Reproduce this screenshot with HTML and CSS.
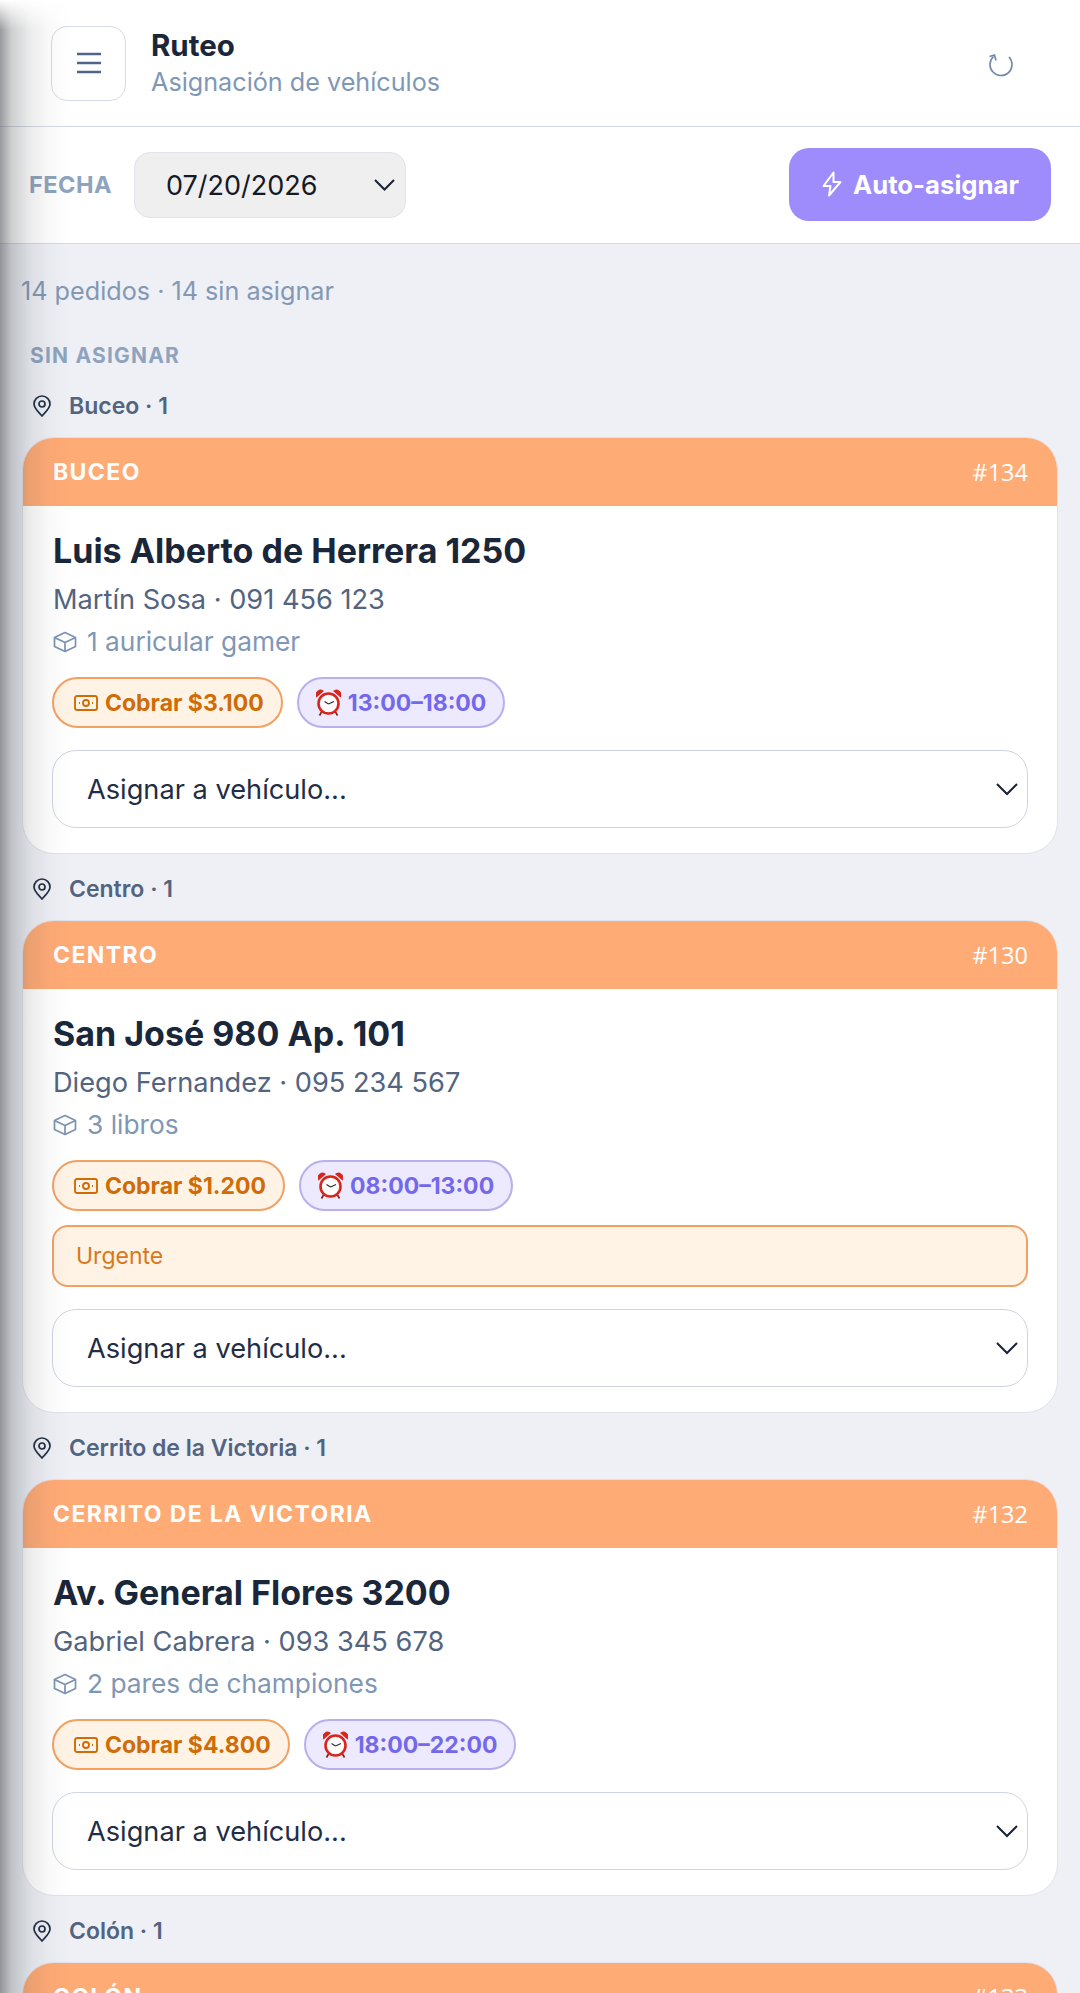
FILE: index.html
```html
<!DOCTYPE html>
<html lang="en">

<head>
    <meta charset="UTF-8">
    <meta name="viewport" content="width=device-width, initial-scale=1.0">
    <title>Ruteo</title>
    <link rel="stylesheet" href="styles.css">
</head>

<body>
    <div class="edge-shadow"></div>

    <header class="topbar">
        <button class="menu-btn">
            <svg width="26" height="22" viewBox="0 0 26 22" fill="none" stroke="#4f6488" stroke-width="2.4">
                <path d="M1 2h24M1 11h24M1 20h24" />
            </svg>
        </button>
        <div class="topbar-titles">
            <div class="topbar-title">Ruteo</div>
            <div class="topbar-sub">Asignación de vehículos</div>
        </div>
        <svg class="refresh" width="26" height="26" viewBox="0 0 26 26" fill="none" stroke="#6f88a8" stroke-width="1.6">
            <path d="M5.5 4.5a11 11 0 1 0 15.5 0.5" />
            <path d="M1.5 4.5l5-1.5 1.5 5.5" />
        </svg>
    </header>

    <div class="toolbar">
        <span class="toolbar-label">FECHA</span>
        <div class="date-select">
            <span>07/20/2026</span>
            <svg width="21" height="12" viewBox="0 0 21 12" fill="none" stroke="#1a2233" stroke-width="2">
                <path d="M1 1l9.500 9.500L20 1" />
            </svg>
        </div>
        <button class="auto-btn">
            <svg width="20" height="26" viewBox="0 0 20 26" fill="none" stroke="#fff" stroke-width="2" stroke-linejoin="round">
                <path d="M11.500 1.500L1.500 15h7l-1.500 9.500L18.500 11h-7z" />
            </svg>
            Auto-asignar
        </button>
    </div>

    <main class="content">
        <p class="summary">14 pedidos · 14 sin asignar</p>
        <h2 class="section-label">SIN ASIGNAR</h2>

        <div class="zone">
            <svg class="pin" width="18" height="22" viewBox="0 0 18 22" fill="none" stroke="#1f2d45" stroke-width="1.7">
                <path d="M9 21c-3-3.500-8-7.500-8-12a8 8 0 0 1 16 0c0 4.500-5 8.500-8 12z" />
                <circle cx="9" cy="9" r="3" />
            </svg>
            Buceo · 1
        </div>
        <article class="card">
            <div class="card-head"><span class="card-zone">BUCEO</span><span class="card-num">#134</span></div>
            <div class="card-body">
                <h3 class="card-address">Luis Alberto de Herrera 1250</h3>
                <div class="card-client">Martín Sosa · 091 456 123</div>
                <div class="card-items">
                    <svg width="24" height="22" viewBox="0 0 24 22" fill="none" stroke="#7b93b3" stroke-width="1.7" stroke-linejoin="round">
                        <path d="M12 1.500L22.500 6.500v9L12 20.500 1.500 15.500v-9z" />
                        <path d="M1.500 6.500L12 11.500l10.500-5M12 11.500v9" />
                    </svg>
                    1 auricular gamer
                </div>
                <div class="chips">
                    <span class="chip chip-cash">
                        <svg width="24" height="16" viewBox="0 0 24 16" fill="none" stroke="#d06c08" stroke-width="1.900">
                            <rect x="1" y="1" width="22" height="14" rx="2" />
                            <circle cx="12" cy="8" r="3" />
                            <path d="M5 8h1M18 8h1" />
                        </svg>
                        Cobrar $3.100
                    </span>
                    <span class="chip chip-time">
                        <svg width="25" height="27" viewBox="0 0 25 27">
                            <path d="M0.500 8.500a5 5 0 0 1 7.500-6.500zM24.500 8.500a5 5 0 0 0-7.500-6.500z" fill="#d8261c" />
                            <path d="M5.500 23l-2 3.500M19.500 23l2 3.500" stroke="#8a1c16" stroke-width="1.600" />
                            <circle cx="12.500" cy="14.500" r="10" fill="#fff" stroke="#d8261c" stroke-width="2.600" />
                            <path d="M12.500 15L8.500 12.500M12.500 15l5.500-2.500" stroke="#333" stroke-width="1.300" fill="none" />
                        </svg>
                        13:00–18:00
                    </span>
                </div>
                <div class="vehicle-select">
                    <span>Asignar a vehículo...</span>
                    <svg width="22" height="13" viewBox="0 0 22 13" fill="none" stroke="#1a2233" stroke-width="2">
                        <path d="M1 1l10 10L21 1" />
                    </svg>
                </div>
            </div>
        </article>

        <div class="zone">
            <svg class="pin" width="18" height="22" viewBox="0 0 18 22" fill="none" stroke="#1f2d45" stroke-width="1.7">
                <path d="M9 21c-3-3.500-8-7.500-8-12a8 8 0 0 1 16 0c0 4.500-5 8.500-8 12z" />
                <circle cx="9" cy="9" r="3" />
            </svg>
            Centro · 1
        </div>
        <article class="card">
            <div class="card-head"><span class="card-zone">CENTRO</span><span class="card-num">#130</span></div>
            <div class="card-body">
                <h3 class="card-address">San José 980 Ap. 101</h3>
                <div class="card-client">Diego Fernandez · 095 234 567</div>
                <div class="card-items">
                    <svg width="24" height="22" viewBox="0 0 24 22" fill="none" stroke="#7b93b3" stroke-width="1.7" stroke-linejoin="round">
                        <path d="M12 1.500L22.500 6.500v9L12 20.500 1.500 15.500v-9z" />
                        <path d="M1.500 6.500L12 11.500l10.500-5M12 11.500v9" />
                    </svg>
                    3 libros
                </div>
                <div class="chips">
                    <span class="chip chip-cash">
                        <svg width="24" height="16" viewBox="0 0 24 16" fill="none" stroke="#d06c08" stroke-width="1.900">
                            <rect x="1" y="1" width="22" height="14" rx="2" />
                            <circle cx="12" cy="8" r="3" />
                            <path d="M5 8h1M18 8h1" />
                        </svg>
                        Cobrar $1.200
                    </span>
                    <span class="chip chip-time">
                        <svg width="25" height="27" viewBox="0 0 25 27">
                            <path d="M0.500 8.500a5 5 0 0 1 7.500-6.500zM24.500 8.500a5 5 0 0 0-7.500-6.500z" fill="#d8261c" />
                            <path d="M5.500 23l-2 3.500M19.500 23l2 3.500" stroke="#8a1c16" stroke-width="1.600" />
                            <circle cx="12.500" cy="14.500" r="10" fill="#fff" stroke="#d8261c" stroke-width="2.600" />
                            <path d="M12.500 15L8.500 12.500M12.500 15l5.500-2.500" stroke="#333" stroke-width="1.300" fill="none" />
                        </svg>
                        08:00–13:00
                    </span>
                </div>
                <div class="card-note">Urgente</div>
                <div class="vehicle-select">
                    <span>Asignar a vehículo...</span>
                    <svg width="22" height="13" viewBox="0 0 22 13" fill="none" stroke="#1a2233" stroke-width="2">
                        <path d="M1 1l10 10L21 1" />
                    </svg>
                </div>
            </div>
        </article>

        <div class="zone">
            <svg class="pin" width="18" height="22" viewBox="0 0 18 22" fill="none" stroke="#1f2d45" stroke-width="1.7">
                <path d="M9 21c-3-3.500-8-7.500-8-12a8 8 0 0 1 16 0c0 4.500-5 8.500-8 12z" />
                <circle cx="9" cy="9" r="3" />
            </svg>
            Cerrito de la Victoria · 1
        </div>
        <article class="card">
            <div class="card-head"><span class="card-zone">CERRITO DE LA VICTORIA</span><span class="card-num">#132</span></div>
            <div class="card-body">
                <h3 class="card-address">Av. General Flores 3200</h3>
                <div class="card-client">Gabriel Cabrera · 093 345 678</div>
                <div class="card-items">
                    <svg width="24" height="22" viewBox="0 0 24 22" fill="none" stroke="#7b93b3" stroke-width="1.7" stroke-linejoin="round">
                        <path d="M12 1.500L22.500 6.500v9L12 20.500 1.500 15.500v-9z" />
                        <path d="M1.500 6.500L12 11.500l10.500-5M12 11.500v9" />
                    </svg>
                    2 pares de championes
                </div>
                <div class="chips">
                    <span class="chip chip-cash">
                        <svg width="24" height="16" viewBox="0 0 24 16" fill="none" stroke="#d06c08" stroke-width="1.900">
                            <rect x="1" y="1" width="22" height="14" rx="2" />
                            <circle cx="12" cy="8" r="3" />
                            <path d="M5 8h1M18 8h1" />
                        </svg>
                        Cobrar $4.800
                    </span>
                    <span class="chip chip-time">
                        <svg width="25" height="27" viewBox="0 0 25 27">
                            <path d="M0.500 8.500a5 5 0 0 1 7.500-6.500zM24.500 8.500a5 5 0 0 0-7.500-6.500z" fill="#d8261c" />
                            <path d="M5.500 23l-2 3.500M19.500 23l2 3.500" stroke="#8a1c16" stroke-width="1.600" />
                            <circle cx="12.500" cy="14.500" r="10" fill="#fff" stroke="#d8261c" stroke-width="2.600" />
                            <path d="M12.500 15L8.500 12.500M12.500 15l5.500-2.500" stroke="#333" stroke-width="1.300" fill="none" />
                        </svg>
                        18:00–22:00
                    </span>
                </div>
                <div class="vehicle-select">
                    <span>Asignar a vehículo...</span>
                    <svg width="22" height="13" viewBox="0 0 22 13" fill="none" stroke="#1a2233" stroke-width="2">
                        <path d="M1 1l10 10L21 1" />
                    </svg>
                </div>
            </div>
        </article>

        <div class="zone">
            <svg class="pin" width="18" height="22" viewBox="0 0 18 22" fill="none" stroke="#1f2d45" stroke-width="1.7">
                <path d="M9 21c-3-3.500-8-7.500-8-12a8 8 0 0 1 16 0c0 4.500-5 8.500-8 12z" />
                <circle cx="9" cy="9" r="3" />
            </svg>
            Colón · 1
        </div>
        <article class="card">
            <div class="card-head"><span class="card-zone">COLÓN</span><span class="card-num">#133</span></div>
        </article>
    </main>
</body>

</html>
```

FILE: styles.css
```css
html,
body {
    height: 1993px;
    overflow: hidden;
}

body {
    margin: 0;
    position: relative;
    background-color: #eef0f6;
    color: #1a2233;
    font-family: Inter, "Liberation Sans", sans-serif;
}

/* drawer shadow that falls over the left side */
.edge-shadow {
    position: absolute;
    top: 0;
    left: 0;
    bottom: 0;
    width: 70px;
    z-index: 5;
    pointer-events: none;
    background: linear-gradient(to right, rgba(60, 62, 68, 0.52), rgba(60, 62, 68, 0.26) 16%, rgba(60, 62, 68, 0.1) 42%, rgba(60, 62, 68, 0.03) 70%, rgba(60, 62, 68, 0));
    -webkit-mask-image: linear-gradient(to bottom, transparent, #000 30px);
    mask-image: linear-gradient(to bottom, transparent, #000 30px);
}

.topbar {
    display: flex;
    align-items: center;
    height: 126px;
    padding: 0 66px 0 51px;
    background-color: #fff;
    border-bottom: 1px solid #d5d9e5;
}

.menu-btn {
    display: flex;
    justify-content: center;
    align-items: center;
    width: 75px;
    height: 75px;
    padding: 0;
    background-color: #fff;
    border: 1px solid #d5dbe7;
    border-radius: 16px;
}

.topbar-titles {
    flex: 1;
    margin-left: 25px;
    padding-top: 2px;
}

.topbar-title {
    font-size: 29.5px;
    font-weight: 700;
    line-height: 34px;
    color: #1a2639;
}

.topbar-sub {
    margin-top: 2px;
    font-size: 25.2px;
    line-height: 37px;
    color: #7f97b6;
}

.refresh {
    margin-top: 4px;
}

.toolbar {
    display: flex;
    align-items: center;
    height: 116px;
    padding: 0 29px;
    background-color: #fff;
    border-bottom: 1px solid #d5d9e5;
}

.toolbar-label {
    margin-top: -2px;
    font-size: 23.5px;
    font-weight: 700;
    letter-spacing: 0.5px;
    color: #8ea3bd;
}

.date-select {
    display: flex;
    justify-content: space-between;
    align-items: center;
    width: 272px;
    height: 66px;
    margin-left: 22px;
    padding: 0 10px 0 31px;
    box-sizing: border-box;
    background-color: #efefef;
    border: 1px solid #e1e3ea;
    border-radius: 16px;
    font-size: 27px;
    color: #151a24;
}

.auto-btn {
    display: flex;
    justify-content: center;
    align-items: center;
    gap: 11px;
    width: 262px;
    height: 73px;
    margin-left: auto;
    margin-top: -2px;
    padding: 0 0 0 1px;
    background-color: #9e8cfc;
    border: none;
    border-radius: 20px;
    color: #fff;
    font-family: inherit;
    font-size: 25.7px;
    font-weight: 700;
}

.content {
    padding: 0 22px;
}

.summary {
    margin: 0 0 0 -1px;
    padding: 32px 0 0;
    font-size: 25.2px;
    line-height: 30px;
    color: #8398b4;
}

.section-label {
    margin: 35px 0 0 8px;
    font-size: 21px;
    font-weight: 700;
    line-height: 30px;
    letter-spacing: 1.2px;
    color: #8ea3bd;
}

.zone {
    display: flex;
    align-items: center;
    gap: 18px;
    height: 62px;
    padding: 4px 0 0 11px;
    font-size: 23px;
    font-weight: 600;
    color: #52647f;
}

.card {
    background-color: #fff;
    border: 1px solid #dfe3ec;
    border-radius: 32px;
    overflow: hidden;
}

.card-head {
    display: flex;
    justify-content: space-between;
    align-items: center;
    height: 69px;
    margin: -1px -1px 0;
    padding: 0 30px 0 31px;
    background-color: #ffab76;
    color: #fff;
}

.card-zone {
    font-size: 23px;
    font-weight: 700;
    letter-spacing: 1.4px;
}

.card-num {
    font-family: "Open Sans", sans-serif;
    font-size: 23.5px;
}

.card-body {
    padding: 21px 29px 25px;
}

.card-address {
    margin: 0;
    padding-left: 1px;
    font-size: 34px;
    font-weight: 700;
    line-height: 48px;
    color: #1a2639;
}

.card-client {
    margin-top: 6px;
    padding-left: 1px;
    font-size: 27.2px;
    line-height: 38px;
    color: #52647f;
}

.card-items {
    display: flex;
    align-items: center;
    gap: 10px;
    margin-top: 5px;
    padding-left: 1px;
    font-size: 26.3px;
    line-height: 36px;
    color: #7f97b6;
}

.chips {
    display: flex;
    gap: 14px;
    margin-top: 17px;
}

.chip {
    display: flex;
    align-items: center;
    gap: 7px;
    height: 51px;
    padding: 0 17px 0 20px;
    box-sizing: border-box;
    border-radius: 26px;
    font-size: 23px;
    font-weight: 700;
}

.chip-cash {
    background-color: #fff3e6;
    border: 2px solid #f2a163;
    color: #d06c08;
}

.chip-time {
    gap: 7px;
    padding: 0 17px;
    background-color: #ede9fe;
    border: 2px solid #b8b0ec;
    color: #7468ea;
}

.card-note {
    display: flex;
    align-items: center;
    height: 62px;
    margin-top: 14px;
    padding: 0 22px;
    box-sizing: border-box;
    background-color: #fff3e6;
    border: 2px solid #f2a163;
    border-radius: 16px;
    font-size: 23px;
    color: #d9771a;
}

.vehicle-select {
    display: flex;
    justify-content: space-between;
    align-items: center;
    height: 78px;
    margin-top: 22px;
    padding: 0 9px 0 34px;
    box-sizing: border-box;
    background-color: #fff;
    border: 1px solid #cfd4e0;
    border-radius: 24px;
    font-size: 27.2px;
    color: #1f2d45;
}
```
